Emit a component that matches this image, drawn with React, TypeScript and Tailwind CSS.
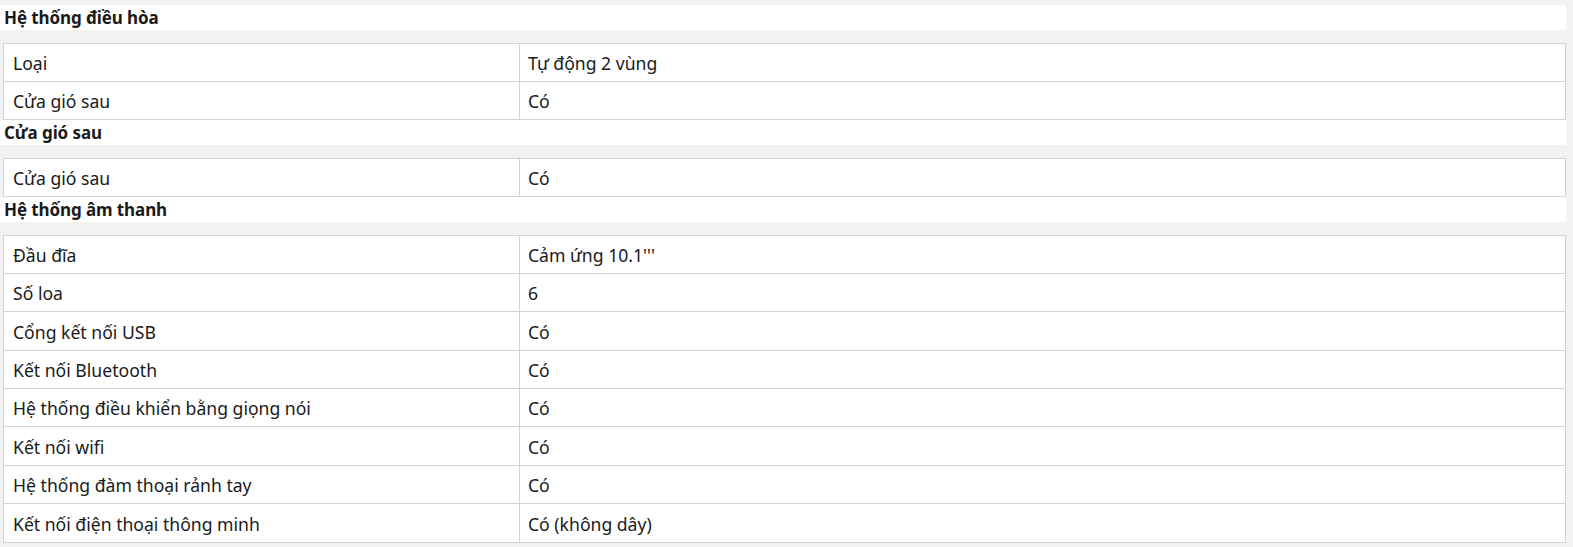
import React from "react";

type Row = [string, string];
const sections: { title: string; rows: Row[] }[] = [
  {
    title: "Hệ thống điều hòa",
    rows: [
      ["Loại", "Tự động 2 vùng"],
      ["Cửa gió sau", "Có"],
    ],
  },
  { title: "Cửa gió sau", rows: [["Cửa gió sau", "Có"]] },
  {
    title: "Hệ thống âm thanh",
    rows: [
      ["Đầu đĩa", "Cảm ứng 10.1'''"],
      ["Số loa", "6"],
      ["Cổng kết nối USB", "Có"],
      ["Kết nối Bluetooth", "Có"],
      ["Hệ thống điều khiển bằng giọng nói", "Có"],
      ["Kết nối wifi", "Có"],
      ["Hệ thống đàm thoại rảnh tay", "Có"],
      ["Kết nối điện thoại thông minh", "Có (không dây)"],
    ],
  },
];

export default function App() {
  return (
    <div
      className="w-full h-[547px] overflow-hidden bg-[#f2f2f2] pt-[5px] text-[#1a1a1a]"
      style={{ fontFamily: '"Noto Sans", sans-serif' }}
    >
      <div className="w-[1566px] flex flex-col">
        {sections.map((s, i) => (
          <div key={i} className="flex flex-col">
            <div className="h-[25px] bg-white pl-[4px] text-[17px] font-bold leading-[25px] tracking-[-0.1px]">
              {s.title}
            </div>
            <div
              className="mt-[13px] ml-[3px] w-[1563px] border border-[#d2d2d2] bg-white flex flex-col"
              style={{ height: `${s.rows.length * 38.5}px` }}
            >
              {s.rows.map((r, j) => (
                <div
                  key={j}
                  className={`flex flex-1 items-center text-[17.6px] ${
                    j < s.rows.length - 1 ? "border-b border-[#d2d2d2]" : ""
                  }`}
                >
                  <div className="w-[516px] h-full flex items-center pl-[9px] border-r border-[#d2d2d2] pt-[2px]">
                    {r[0]}
                  </div>
                  <div className="flex-1 h-full flex items-center pl-[8px] pt-[2px]">{r[1]}</div>
                </div>
              ))}
            </div>
          </div>
        ))}
      </div>
    </div>
  );
}
